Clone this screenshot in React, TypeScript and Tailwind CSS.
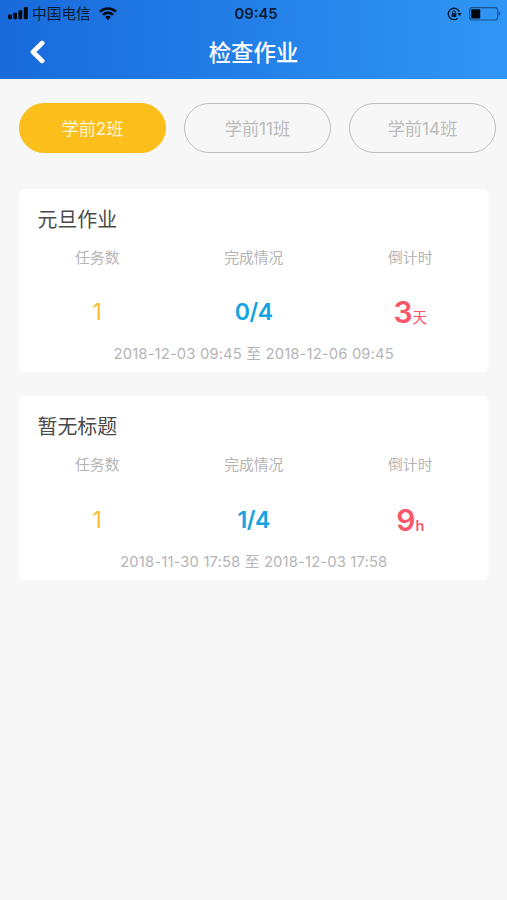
import { useState } from 'react';

type Homework = {
  id: number;
  title: string;
  tasks: number;
  progress: string;
  remain: string;
  unit: string;
  start: string;
  end: string;
};

const classes = ['学前2班', '学前11班', '学前14班'];

const homeworks: Homework[] = [
  {
    id: 1,
    title: '元旦作业',
    tasks: 1,
    progress: '0/4',
    remain: '3',
    unit: '天',
    start: '2018-12-03 09:45',
    end: '2018-12-06 09:45',
  },
  {
    id: 2,
    title: '暂无标题',
    tasks: 1,
    progress: '1/4',
    remain: '9',
    unit: 'h',
    start: '2018-11-30 17:58',
    end: '2018-12-03 17:58',
  },
];

function StatusBar() {
  return (
    <div className="grid h-[27px] grid-cols-3 items-center px-2 text-[#0b1b33]">
      <div className="flex items-center">
        <svg className="h-[13px] w-5 text-[#03080f]" viewBox="0 0 20 13" fill="currentColor">
          <rect x="0" y="7.6" width="3.8" height="4.6" rx="1.2" />
          <rect x="5.2" y="5.8" width="3.8" height="6.4" rx="1.2" />
          <rect x="10.4" y="3.2" width="3.9" height="9" rx="1.2" />
          <rect x="15.8" y="0" width="4" height="12.2" rx="1.2" />
        </svg>
        <span className="ml-1 text-[14.7px] leading-5">中国电信</span>
        <svg className="ml-2 h-[13px] w-[18px] text-[#03080f]" viewBox="0 0 18 13" fill="none" stroke="currentColor" strokeWidth="2.5">
          <path d="M1 4.7a11.4 11.4 0 0 1 16 0" />
          <path d="M4 7.9a7.1 7.1 0 0 1 10 0" />
          <path d="M9 13l-2.9-3a4 4 0 0 1 5.8 0z" fill="currentColor" stroke="none" />
        </svg>
      </div>
      <span className="pl-[5px] text-center text-[14.8px] leading-5 font-semibold">09:45</span>
      <div className="-mr-0.5 flex items-center justify-end gap-[7px]">
        <svg className="h-[14px] w-[15px]" viewBox="0 0 15 14" fill="none" stroke="currentColor">
          <path d="M12.4 5A5.7 5.7 0 1 0 10.8 11.2" strokeWidth="1.4" />
          <path d="M10.2 6h4.6l-2.3 3.2z" fill="currentColor" stroke="none" />
          <rect x="4.6" y="6.2" width="4.8" height="3.8" rx="0.5" fill="currentColor" stroke="none" />
          <path d="M5.6 6.4V5.2a1.4 1.4 0 0 1 2.8 0v1.2" strokeWidth="1" />
        </svg>
        <svg className="h-[14px] w-8" viewBox="0 0 32 14" fill="none">
          <rect x="0.6" y="0.6" width="28" height="12.4" rx="2.8" stroke="#0b1b33" strokeOpacity="0.55" strokeWidth="1.1" />
          <rect x="2.2" y="2.2" width="9" height="9.2" rx="1" fill="#03080f" />
          <path d="M29.8 4.6c1.8.5 1.8 3.9 0 4.4z" fill="#0b1b33" fillOpacity="0.6" />
        </svg>
      </div>
    </div>
  );
}

function HomeworkCard({ item }: { item: Homework }) {
  return (
    <div className="h-[183.5px] rounded-md bg-white pt-[17px]">
      <h2 className="pl-[18.5px] text-[19.9px] leading-7 text-[#4a4a4a]">{item.title}</h2>
      <div className="mt-[14px] grid grid-cols-3 text-center text-[14.8px] leading-5 text-[#b5b5b5]">
        <span>任务数</span>
        <span>完成情况</span>
        <span>倒计时</span>
      </div>
      <div className="mt-[24.5px] grid h-10 grid-cols-3 text-center leading-10">
        <span className="text-[23px] text-[#fdbc2c]">{item.tasks}</span>
        <span className="text-[23px] font-semibold tracking-[-0.4px] text-[#14a3e4]">{item.progress}</span>
        <span className="text-[30px] font-semibold text-[#f9566a]">
          {item.remain}
          <span className={item.unit === 'h' ? 'text-[14.5px] font-semibold' : 'text-[14.5px] font-normal'}>{item.unit}</span>
        </span>
      </div>
      <p className="mt-3 text-center text-[14.8px] leading-5 tracking-[0.14px] text-[#b5b5b5]">
        {item.start} 至 {item.end}
      </p>
    </div>
  );
}

export default function App() {
  const [active, setActive] = useState(0);

  return (
    <div className="min-h-screen overflow-hidden bg-[#f7f7f7] font-[Inter,'Noto_Sans_CJK_SC',sans-serif]">
      <header className="h-[79px] bg-linear-to-r from-[#196adb] to-[#3096f5]">
        <StatusBar />
        <div className="grid h-[50px] grid-cols-3 items-center">
          <button type="button" className="ml-[29px] w-4" aria-label="返回">
            <svg className="h-6 w-4" viewBox="0 0 16 24" fill="none" stroke="white" strokeWidth="4.6" strokeLinecap="round" strokeLinejoin="round">
              <path d="M13.2 3L4 12l9.2 9" />
            </svg>
          </button>
          <h1 className="pt-0.5 text-center text-[22.4px] leading-8 font-medium whitespace-nowrap text-white">检查作业</h1>
        </div>
      </header>

      <div className="mt-6 flex gap-[18px] pl-[19px]">
        {classes.map((name, i) => (
          <button
            key={name}
            type="button"
            onClick={() => setActive(i)}
            className={`h-[49.5px] w-[147px] shrink-0 rounded-full border-[1.5px] pt-0.5 text-[17.2px] ${
              active === i ? 'border-[#fcbe1b] bg-[#fcbe1b] text-[#fff6dc]' : 'border-[#bdbdbd] text-[#bcbcbc]'
            }`}
          >
            {name}
          </button>
        ))}
      </div>

      <div className="mt-9 flex flex-col gap-6 pr-[18.5px] pl-[19px]">
        {homeworks.map(item => (
          <HomeworkCard key={item.id} item={item} />
        ))}
      </div>
    </div>
  );
}
